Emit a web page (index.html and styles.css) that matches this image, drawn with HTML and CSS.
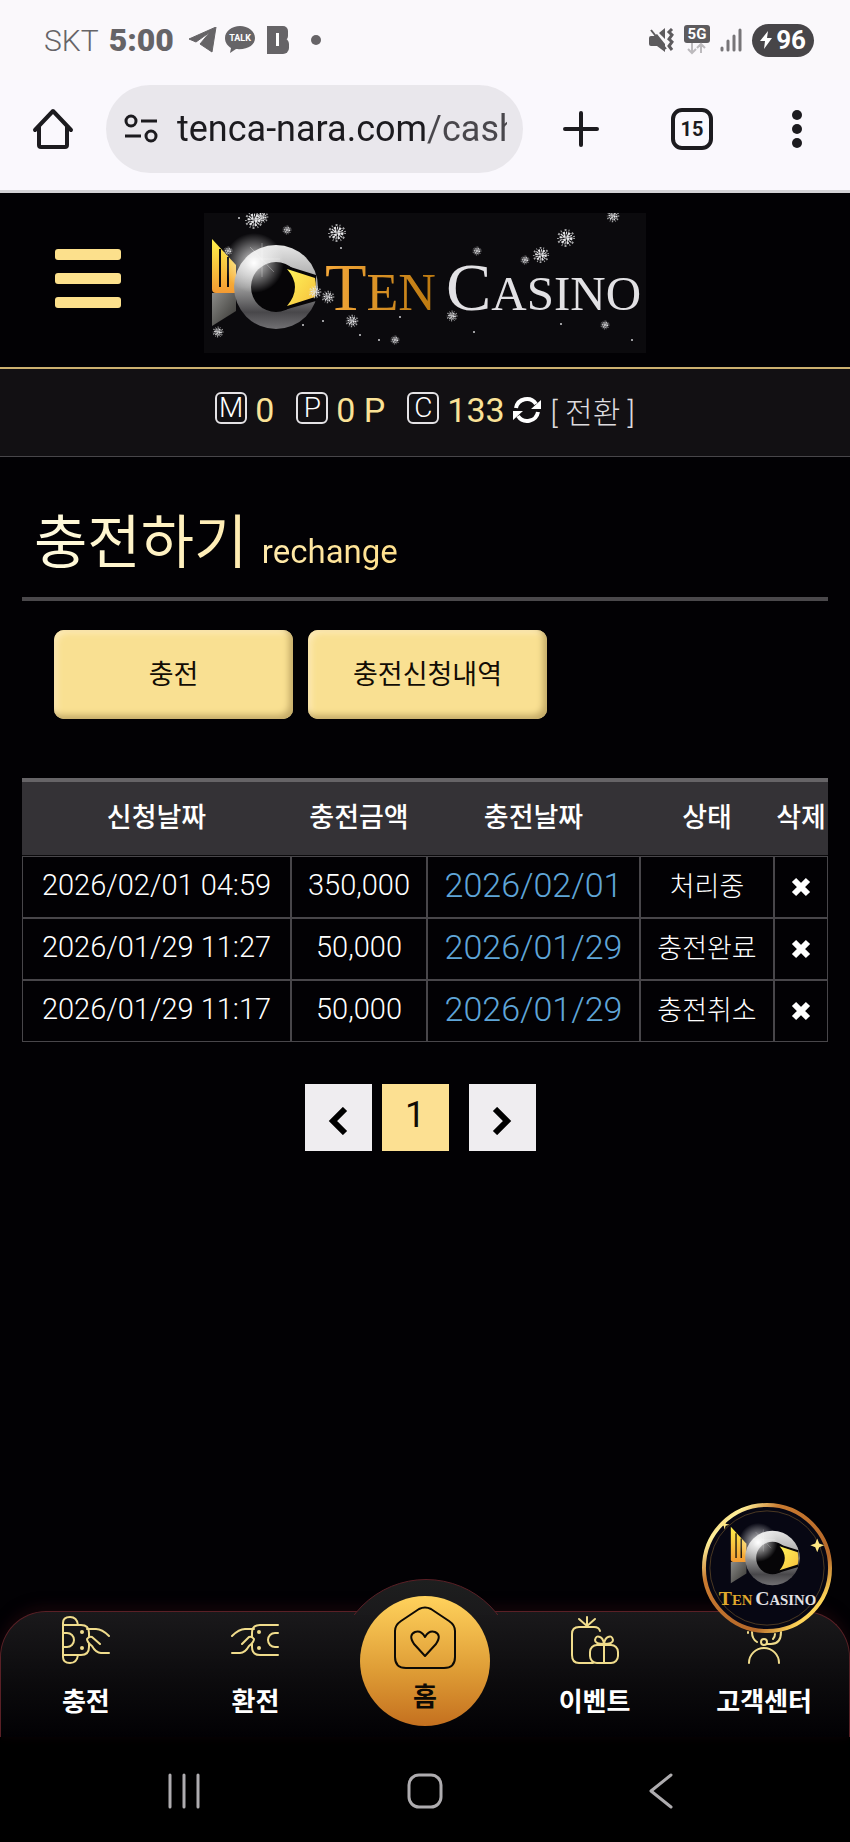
FILE: index.html
```
<!DOCTYPE html>
<html lang="ko">
<head>
  <meta charset="UTF-8">
  <meta name="viewport" content="width=device-width, initial-scale=1.0">
  <title>TEN CASINO | 충전하기</title>
  <link rel="stylesheet" href="styles.css">
</head>
<body>
  <!-- 상태바 -->
  <div class="status">
    <span class="carrier">SKT</span>
    <span class="clock">5:00</span>
    <svg class="telegram" width="29" height="26" viewBox="0 0 29 26"><path d="M1 12 28 0 24 25 12 17 22 5 8 15Z" fill="#666467" stroke="#666467" stroke-linejoin="round"/></svg>
    <svg class="talk" width="30" height="28" viewBox="0 0 30 28"><path d="M15 0C7 0 0 5 0 12c0 5 3 8 6 10l-1 5 6-4c12 1 19-4 19-11S23 0 15 0Z" fill="#666467"/><text x="15" y="15" text-anchor="middle" font-family="Roboto, sans-serif" font-size="9" font-weight="700" fill="#fff">TALK</text></svg>
    <svg class="band" width="22" height="28" viewBox="0 0 22 28"><rect width="12" height="28" fill="#666467"/><rect x="2" width="19" height="15" rx="5" fill="#666467"/><rect x="2" y="12" width="20" height="16" rx="6" fill="#666467"/><rect x="9" y="7" width="3" height="13" fill="#fff"/></svg>
    <span class="more-dot"></span>
    <span class="status-right">
      <svg width="25" height="24" viewBox="0 0 25 24"><path d="M0 10q0-2 2-2h3l3-2 8 10v8l-8-6H2q-2 0-2-2ZM10 5l6-5v11Z" fill="#5d5b5e"/><path d="m2 2 15 19" stroke="#5d5b5e" stroke-width="2"/><path d="m23 1-3 3 3 3-3 4 3 3-3 4 3 4" fill="none" stroke="#5d5b5e" stroke-width="3"/></svg>
      <svg width="26" height="30" viewBox="0 0 26 30"><rect width="26" height="18" rx="3" fill="#5d5b5e"/><text x="13" y="14" text-anchor="middle" font-family="Roboto, sans-serif" font-size="15" font-weight="700" fill="#fff">5G</text><path d="M8 18v10m-4-4 4 4 4-4M17 28V19m-4 4 4-4 4 4" fill="none" stroke="#bcbabd" stroke-width="2"/></svg>
      <svg width="22" height="24" viewBox="0 0 22 24"><path d="M2 20v2M8 13v9M14 8v14M20 2v20" stroke="#777578" stroke-width="3" stroke-linecap="round"/></svg>
      <span class="battery"><svg width="12" height="18" viewBox="0 0 12 18"><path d="M8 0 0 10h5L4 18l8-11H7Z" fill="#fff"/></svg>96</span>
    </span>
  </div>

  <!-- 브라우저 툴바 -->
  <div class="toolbar">
    <button class="tool" type="button" aria-label="홈페이지"><svg width="42" height="42" viewBox="0 0 42 42"><path d="M3 22 21 3l18 19M7 18v19q0 2 2 2h24q2 0 2-2V18" fill="none" stroke="#1c1b1f" stroke-width="4" stroke-linecap="round" stroke-linejoin="round"/></svg></button>
    <div class="address">
      <svg width="35" height="30" viewBox="0 0 35 30"><g fill="none" stroke="#1c1b1f" stroke-width="3"><circle cx="7" cy="7" r="5"/><circle cx="27" cy="22" r="5"/><path d="M17 7h16M1 22h16"/></g></svg>
      <input type="text" value="tenca-nara.com/cash" aria-label="주소">
    </div>
    <button class="tool" type="button" aria-label="새 탭"><svg width="36" height="36" viewBox="0 0 36 36"><path d="M18 2v32M2 18h32" stroke="#1c1b1f" stroke-width="4" stroke-linecap="round"/></svg></button>
    <button class="tool tabs" type="button">15</button>
    <button class="tool" type="button" aria-label="메뉴"><svg width="10" height="38" viewBox="0 0 10 38"><g fill="#1c1b1f"><circle cx="5" cy="5" r="5"/><circle cx="5" cy="19" r="5"/><circle cx="5" cy="33" r="5"/></g></svg></button>
  </div>

  <!-- 헤더 -->
  <header class="header">
    <button class="menu" type="button" aria-label="전체메뉴"><span></span><span></span><span></span></button>
    <a class="logo" href="#" aria-label="TEN CASINO">
      <svg width="442" height="140" viewBox="0 0 442 140">
        <defs>
          <linearGradient id="gold" x1="0" y1="0" x2="0" y2="1"><stop offset="0" stop-color="#fff04a"/><stop offset="1" stop-color="#f39a32"/></linearGradient>
          <linearGradient id="eye" x1="0" y1="0" x2="1" y2="1"><stop offset="0" stop-color="#fff45a"/><stop offset="1" stop-color="#f6bf3c"/></linearGradient>
          <linearGradient id="ring" x1="0" y1="0" x2="0" y2="1"><stop offset="0" stop-color="#e6e6e6"/><stop offset=".5" stop-color="#9b9b9b"/><stop offset=".8" stop-color="#48474a"/><stop offset="1" stop-color="#717073"/></linearGradient>
          <linearGradient id="fin" x1="0" y1="0" x2="1" y2="1"><stop offset="0" stop-color="#8b8b88"/><stop offset="1" stop-color="#33322f"/></linearGradient>
          <linearGradient id="ten" x1="0" y1="0" x2="1" y2="0"><stop offset="0" stop-color="#f6a93a"/><stop offset="1" stop-color="#bb780f"/></linearGradient>
          <radialGradient id="flare"><stop offset="0" stop-color="#fff"/><stop offset=".3" stop-color="#fff" stop-opacity=".6"/><stop offset="1" stop-color="#fff" stop-opacity="0"/></radialGradient>
          <g id="fish">
            <path d="M8 80h24v18L8 113Z" fill="url(#fin)"/>
            <path d="M8 26 32 52V80H12q-4 0-4-4Z" fill="url(#gold)"/>
            <path d="M16 36v38M24 44v30" stroke="#0b0a0d" stroke-width="2"/>
            <circle cx="72" cy="74" r="42" fill="url(#ring)"/>
            <circle cx="72" cy="74" r="25" fill="#060507"/>
            <path d="M80 52 112 62v26L80 97q20-24 0-45Z" fill="#060507"/>
            <path d="M83 56 111 65q2 10 0 19L83 93q16-19 0-37Z" fill="url(#eye)"/>
            <circle cx="50" cy="50" r="30" fill="url(#flare)"/>
            <path d="M58 30v34M42 46h34M46 34l24 25" stroke="#fff" stroke-opacity=".3"/>
          </g>
          <g id="snow" fill="none" stroke="#e4e4e6">
            <circle r="2" stroke-width="3" stroke-dasharray="2 1"/>
            <circle r="5" stroke-width="3" stroke-dasharray="2 1 1 1"/>
            <circle r="8" stroke-width="2" stroke-dasharray="1 3 2 2" stroke-opacity=".7"/>
          </g>
        </defs>
        <rect width="442" height="140" fill="#0b0a0d"/>
        <use href="#fish"/>
        <g font-family="'Liberation Serif', serif">
          <text x="121" y="97" font-size="68" fill="url(#ten)">T<tspan font-size="52">EN</tspan></text>
          <text x="242" y="97" font-size="68" fill="#e2e1e4">C<tspan font-size="49">ASINO</tspan></text>
        </g>
        <use href="#snow" transform="translate(50 7)"/>
        <use href="#snow" transform="translate(58 4) scale(.7)"/>
        <use href="#snow" transform="translate(83 17) scale(.5)"/>
        <use href="#snow" transform="translate(133 20)"/>
        <use href="#snow" transform="translate(24 38) scale(.5)"/>
        <use href="#snow" transform="translate(14 119) scale(.6)"/>
        <use href="#snow" transform="translate(111 79) scale(.7)"/>
        <use href="#snow" transform="translate(124 84) scale(.7)"/>
        <use href="#snow" transform="translate(148 108) scale(.7)"/>
        <use href="#snow" transform="translate(191 127) scale(.5)"/>
        <use href="#snow" transform="translate(248 103) scale(.6)"/>
        <use href="#snow" transform="translate(273 38) scale(.5)"/>
        <use href="#snow" transform="translate(321 47) scale(.5)"/>
        <use href="#snow" transform="translate(337 42) scale(.9)"/>
        <use href="#snow" transform="translate(362 25)"/>
        <use href="#snow" transform="translate(409 3) scale(.7)"/>
        <use href="#snow" transform="translate(401 112) scale(.5)"/>
        <g fill="#cfcfd2"><circle cx="35" cy="5" r="1"/><circle cx="137" cy="35" r="1"/><circle cx="99" cy="112" r="1"/><circle cx="119" cy="108" r="1"/><circle cx="156" cy="122" r="1"/><circle cx="175" cy="127" r="1"/><circle cx="196" cy="104" r="1"/><circle cx="270" cy="119" r="1"/><circle cx="357" cy="111" r="1"/><circle cx="428" cy="127" r="1"/></g>
      </svg>
    </a>
  </header>

  <!-- 보유금액 -->
  <div class="balance">
    <span class="badge">M</span><span class="amount">0</span>
    <span class="badge">P</span><span class="amount">0 P</span>
    <span class="badge">C</span><span class="amount">133</span>
    <button class="refresh" type="button" aria-label="새로고침"><svg width="28" height="28" viewBox="0 0 28 28"><path d="M3 12A11 11 0 0 1 23 8M25 16A11 11 0 0 1 5 20" fill="none" stroke="#fff" stroke-width="4"/><path d="M28 4v9h-10ZM0 24v-9h10Z" fill="#fff"/></svg></button>
    <a class="convert" href="#">[ 전환 ]</a>
  </div>

  <main class="content">
    <h1 class="title"><span>충전하기 <small>rechange</small></span></h1>

    <div class="actions">
      <button type="button">충전</button>
      <button type="button">충전신청내역</button>
    </div>

    <table class="history">
      <colgroup><col><col class="col-amount"><col class="col-done"><col class="col-state"><col class="col-del"></colgroup>
      <thead>
        <tr><th>신청날짜</th><th>충전금액</th><th>충전날짜</th><th>상태</th><th>삭제</th></tr>
      </thead>
      <tbody>
        <tr>
          <td>2026/02/01 04:59</td><td>350,000</td><td class="done">2026/02/01</td><td class="state">처리중</td>
          <td><button class="del" type="button" aria-label="삭제"><svg width="20" height="20" viewBox="0 0 20 20"><path d="m3 3 14 14M17 3 3 17" stroke="#fff" stroke-width="6"/></svg></button></td>
        </tr>
        <tr>
          <td>2026/01/29 11:27</td><td>50,000</td><td class="done">2026/01/29</td><td class="state">충전완료</td>
          <td><button class="del" type="button" aria-label="삭제"><svg width="20" height="20" viewBox="0 0 20 20"><path d="m3 3 14 14M17 3 3 17" stroke="#fff" stroke-width="6"/></svg></button></td>
        </tr>
        <tr>
          <td>2026/01/29 11:17</td><td>50,000</td><td class="done">2026/01/29</td><td class="state">충전취소</td>
          <td><button class="del" type="button" aria-label="삭제"><svg width="20" height="20" viewBox="0 0 20 20"><path d="m3 3 14 14M17 3 3 17" stroke="#fff" stroke-width="6"/></svg></button></td>
        </tr>
      </tbody>
    </table>

    <div class="paging">
      <button type="button" aria-label="이전"><svg width="20" height="28" viewBox="0 0 20 28"><path d="M17 2 5 14l12 12" fill="none" stroke="#000" stroke-width="6"/></svg></button>
      <button class="current" type="button">1</button>
      <button class="next" type="button" aria-label="다음"><svg width="20" height="28" viewBox="0 0 20 28"><path d="m3 2 12 12L3 26" fill="none" stroke="#000" stroke-width="6"/></svg></button>
    </div>
  </main>

  <!-- 하단 메뉴 -->
  <nav class="bottom">
    <a href="#">
      <svg width="48" height="48" viewBox="0 0 48 48"><g fill="none" stroke="#f0dc8c" stroke-width="2" stroke-linecap="round" stroke-linejoin="round"><path d="M1 7q0-6 7-6t8 8M1 7v34q0 6 7 6t8-8M1 9h18q8 0 8 8v4M1 39h18q8 0 8-8v-3M1 17h4a7 7 0 0 1 0 14H1"/><path d="M25 13h9q6 0 13 7M38 28l-8-7q-3-1-5 2 0 3 5 7 4 7 9 7h8"/></g><circle cx="20" cy="16" r="2" fill="#f0dc8c"/><circle cx="20" cy="32" r="2" fill="#f0dc8c"/></svg>
      <span>충전</span>
    </a>
    <a href="#">
      <svg width="48" height="48" viewBox="0 0 48 48"><g fill="none" stroke="#f0dc8c" stroke-width="2" stroke-linecap="round" stroke-linejoin="round"><path d="M47 9H29q-8 0-8 8v4M47 39H29q-8 0-8-8v-3M47 17h-3a7 7 0 0 0 0 14h3"/><path d="M23 13h-9Q8 13 1 20M11 28l7-7q3-1 5 2 0 3-5 7-4 7-9 7H1"/></g><circle cx="28" cy="16" r="2" fill="#f0dc8c"/><circle cx="28" cy="32" r="2" fill="#f0dc8c"/></svg>
      <span>환전</span>
    </a>
    <a class="home" href="#">
      <span class="home-circle">
        <svg width="64" height="64" viewBox="0 0 64 64"><g fill="none" stroke="#0d0a05" stroke-width="2" stroke-linejoin="round"><path d="M26 3q6-3 12 0l18 12q6 4 6 10v26q0 11-11 11H13Q2 62 2 51V25q0-6 6-10Z"/><path d="M32 50 21 38q-6-9 1-12 6-2 10 5 4-7 10-5 7 3 1 12Z"/></g></svg>
        <span>홈</span>
      </span>
    </a>
    <a href="#">
      <svg width="48" height="48" viewBox="0 0 48 48"><g fill="none" stroke="#f0dc8c" stroke-width="2" stroke-linecap="round" stroke-linejoin="round"><path d="M29 15q-1-4-6-4H8q-7 0-7 7v21q0 8 7 8h14M16 11V1M16 10 8 3M16 10l8-7"/><rect x="19" y="29" width="28" height="18" rx="7"/><path d="M33 28v19M33 28q-9 0-9-4 1-5 5-3 3 1 4 7 1-6 4-7 4-2 5 3 0 4-9 4"/></g></svg>
      <span>이벤트</span>
    </a>
    <a href="#">
      <svg width="48" height="48" viewBox="0 0 48 48"><g fill="none" stroke="#f0dc8c" stroke-width="2" stroke-linecap="round"><path d="M9 47a15 15 0 0 1 30 0M12 16q0 7 5 10M35 18q0 3-2 5M41 16q0 12-10 12h-4"/><circle cx="24" cy="26" r="3"/><path d="M8 16v1"/></g></svg>
      <span>고객센터</span>
    </a>
    <a class="floating" href="#" aria-label="TEN CASINO">
      <svg width="130" height="130" viewBox="0 0 132 132">
        <defs>
          <linearGradient id="rim" x1="0" y1="0" x2="1" y2="1"><stop offset="0" stop-color="#d4792b"/><stop offset=".16" stop-color="#fff19a"/><stop offset=".3" stop-color="#c97a30"/><stop offset=".7" stop-color="#b5682a"/><stop offset=".85" stop-color="#ffd75a"/><stop offset="1" stop-color="#d98b35"/></linearGradient>
        </defs>
        <circle cx="66" cy="66" r="64" fill="#070713" stroke="url(#rim)" stroke-width="4"/>
        <circle cx="66" cy="66" r="58" fill="none" stroke="#4b3923"/>
        <g transform="translate(24 7) scale(.66)"><use href="#fish"/></g>
        <g font-family="'Liberation Serif', serif" font-weight="700">
          <text x="17" y="104" font-size="20" fill="#e0a92c">T<tspan font-size="15">EN</tspan></text>
          <text x="54" y="104" font-size="20" fill="#e2e1e4">C<tspan font-size="15">ASINO</tspan></text>
        </g>
        <path d="m117 36 2 5 5 2-5 2-2 5-2-5-5-2 5-2ZM23 17l1 4 4 1-4 1-1 4-1-4-4-1 4-1Z" fill="#ffe783"/>
      </svg>
    </a>
  </nav>

  <!-- 안드로이드 내비게이션 -->
  <div class="system">
    <button type="button" aria-label="최근 앱"><svg width="34" height="36" viewBox="0 0 34 36"><path d="M3 2v32M17 2v32M31 2v32" stroke="#aeacaf" stroke-width="3" stroke-linecap="round"/></svg></button>
    <button type="button" aria-label="홈"><svg width="36" height="36" viewBox="0 0 36 36"><rect x="2" y="2" width="32" height="32" rx="10" fill="none" stroke="#aeacaf" stroke-width="3"/></svg></button>
    <button type="button" aria-label="뒤로"><svg width="24" height="36" viewBox="0 0 24 36"><path d="M22 2 2 18l20 16" fill="none" stroke="#aeacaf" stroke-width="3" stroke-linecap="round" stroke-linejoin="round"/></svg></button>
  </div>
</body>
</html>
```
FILE: styles.css
```
* {
  box-sizing: border-box;
  margin: 0;
  padding: 0;
}
body {
  min-height: 100vh;
  display: flex;
  flex-direction: column;
  background: #020104;
  color: #fff;
  font-family: Roboto, 'Noto Sans CJK KR', sans-serif;
}
svg {
  display: block;
}
a {
  color: inherit;
  text-decoration: none;
}
button {
  border: none;
  background: none;
  font-family: inherit;
  cursor: pointer;
}

/* 상태바 */
.status {
  display: flex;
  align-items: center;
  height: 80px;
  padding: 0 36px 0 44px;
  background: #faf8fb;
  color: #666467;
}
.carrier {
  font-size: 30px;
  font-weight: 300;
  margin-right: 10px;
}
.clock {
  font-size: 32px;
  font-weight: 900;
}
.telegram {
  margin: 0 8px 0 14px;
}
.band {
  margin-left: 12px;
}
.more-dot {
  width: 10px;
  height: 10px;
  margin-left: 22px;
  border-radius: 50%;
  background: #666467;
}
.status-right {
  display: flex;
  align-items: center;
  gap: 10px;
  margin-left: auto;
}
.battery {
  display: flex;
  align-items: center;
  gap: 4px;
  height: 33px;
  padding: 0 8px;
  border-radius: 17px;
  background: #474548;
  color: #fff;
  font-size: 26px;
  font-weight: 700;
}

/* 툴바 */
.toolbar {
  display: flex;
  align-items: center;
  height: 113px;
  padding: 0 48px 12px 32px;
  background: #faf8fd;
  border-bottom: 3px solid #d3d2d5;
}
.address {
  display: flex;
  align-items: center;
  flex: 1;
  min-width: 0;
  height: 88px;
  margin: 0 40px 0 32px;
  padding: 0 16px 0 18px;
  border-radius: 44px;
  background: #e9e7ec;
}
.address input {
  flex: 1;
  min-width: 0;
  margin-left: 18px;
  border: none;
  outline: none;
  font-family: Roboto, sans-serif;
  font-size: 36px;
  color: transparent;
  background: linear-gradient(90deg, #1c1b1f 251px, #49474c 251px);
  -webkit-background-clip: text;
  background-clip: text;
}
.tabs {
  width: 42px;
  height: 42px;
  margin: 0 79px 0 72px;
  border: 4px solid #1c1b1f;
  border-radius: 11px;
  color: #1c1b1f;
  font-size: 20px;
  font-weight: 700;
}

/* 헤더 */
.header {
  display: grid;
  grid-template-columns: 1fr auto 1fr;
  align-items: center;
  padding: 20px 0 14px;
  border-bottom: 2px solid #cdb170;
}
.menu {
  display: flex;
  flex-direction: column;
  gap: 13px;
  width: 66px;
  margin-left: 55px;
  padding-bottom: 9px;
}
.menu span {
  height: 11px;
  border-radius: 3px;
  background: #fce08c;
}

/* 보유금액 */
.balance {
  display: flex;
  justify-content: center;
  align-items: center;
  height: 88px;
  padding-bottom: 6px;
  background: #121013;
  border-bottom: 1px solid #48464a;
}
.badge {
  width: 32px;
  height: 32px;
  margin-bottom: 4px;
  border: 2px solid #e4e2e5;
  border-radius: 6px;
  font-size: 28px;
  font-weight: 300;
  line-height: 28px;
  text-align: center;
}
.amount {
  margin: 0 22px 0 8px;
  color: #fae297;
  font-size: 34px;
}
.refresh {
  margin-left: -14px;
}
.convert {
  margin-left: 10px;
  color: #dddbde;
  font-size: 30px;
  font-weight: 300;
}

/* 본문 */
.content {
  flex: 1;
  padding: 0 22px;
}
.title {
  padding: 46px 12px 5px;
  border-bottom: 4px solid #4a484b;
  font-size: 58px;
  font-weight: 400;
  line-height: 80px;
}
.title span {
  color: transparent;
  background: linear-gradient(90deg, #fffbe0, #ffe08c);
  -webkit-background-clip: text;
  background-clip: text;
}
.title small {
  font-size: 33px;
  font-weight: 400;
}
.actions {
  display: flex;
  gap: 15px;
  padding: 29px 32px 59px;
}
.actions button {
  width: 239px;
  height: 89px;
  padding-bottom: 4px;
  border-radius: 10px;
  background: #f9e092;
  box-shadow: inset -4px -4px 6px #c4ab68, inset 3px 3px 6px #fdeab8;
  color: #120c04;
  font-size: 27px;
}
.history {
  width: 100%;
  table-layout: fixed;
  border-collapse: separate;
  border-spacing: 0;
  text-align: center;
}
.col-amount {
  width: 136px;
}
.col-done {
  width: 213px;
}
.col-state {
  width: 134px;
}
.col-del {
  width: 54px;
}
.history th {
  height: 78px;
  padding-bottom: 6px;
  border-top: 4px solid #666467;
  border-bottom: 1px solid #0a090b;
  background: #343236;
  font-size: 27px;
  font-weight: 500;
  white-space: nowrap;
}
.history td {
  height: 62px;
  padding-bottom: 4px;
  border: 1px solid #48464a;
  font-size: 29px;
  font-weight: 300;
}
.history .done {
  color: #5fa5d8;
  font-size: 34px;
}
.history .state {
  padding-bottom: 6px;
  font-size: 27px;
}
.del {
  vertical-align: middle;
}
.paging {
  display: flex;
  justify-content: center;
  gap: 10px;
  padding: 42px 10px 0 0;
}
.paging button {
  display: flex;
  justify-content: center;
  align-items: center;
  width: 67px;
  height: 67px;
  padding-top: 6px;
  background: #efedf0;
}
.paging .current {
  padding: 0 0 6px;
  background: #fce092;
  color: #120c04;
  font-size: 36px;
  font-weight: 400;
}
.paging .next {
  margin-left: 10px;
}

/* 하단 메뉴 */
.bottom {
  position: relative;
  display: grid;
  grid-template-columns: repeat(5, 1fr);
  height: 126px;
  border: 1px solid #5a2026;
  border-bottom: none;
  border-radius: 46px 46px 0 0;
  background: linear-gradient(#1a191b, #0c0b0d 55%, #020104);
  box-shadow: 0 -4px 14px #16060a;
  font-family: 'Noto Sans CJK KR', sans-serif;
  font-size: 26px;
  font-weight: 700;
}
/* 가운데 볼록한 부분 */
.bottom::before {
  content: '';
  position: absolute;
  top: -33px;
  left: calc(50% - 90px);
  width: 180px;
  height: 180px;
  border: 1px solid #5a2026;
  border-radius: 50%;
  background: linear-gradient(#1e1f1f, #1a191b 20%);
  clip-path: inset(0 0 146px 0);
}
.bottom > a {
  display: flex;
  flex-direction: column;
  align-items: center;
  gap: 16px;
  padding-top: 4px;
  line-height: 40px;
}
.bottom .home-circle {
  position: absolute;
  top: -16px;
  left: calc(50% - 65px);
  width: 130px;
  height: 130px;
  padding-top: 10px;
  border-radius: 50%;
  background: linear-gradient(#ffd25c, #dd9a34 60%, #c4701f);
  color: #0d0a05;
  display: flex;
  flex-direction: column;
  align-items: center;
  line-height: 50px;
}
.bottom .floating {
  position: absolute;
  top: -109px;
  right: 17px;
  padding: 0;
}

/* 시스템 내비게이션 */
.system {
  display: flex;
  justify-content: space-between;
  align-items: center;
  height: 105px;
  padding: 3px 177px 0 167px;
  background: #000;
}
```
